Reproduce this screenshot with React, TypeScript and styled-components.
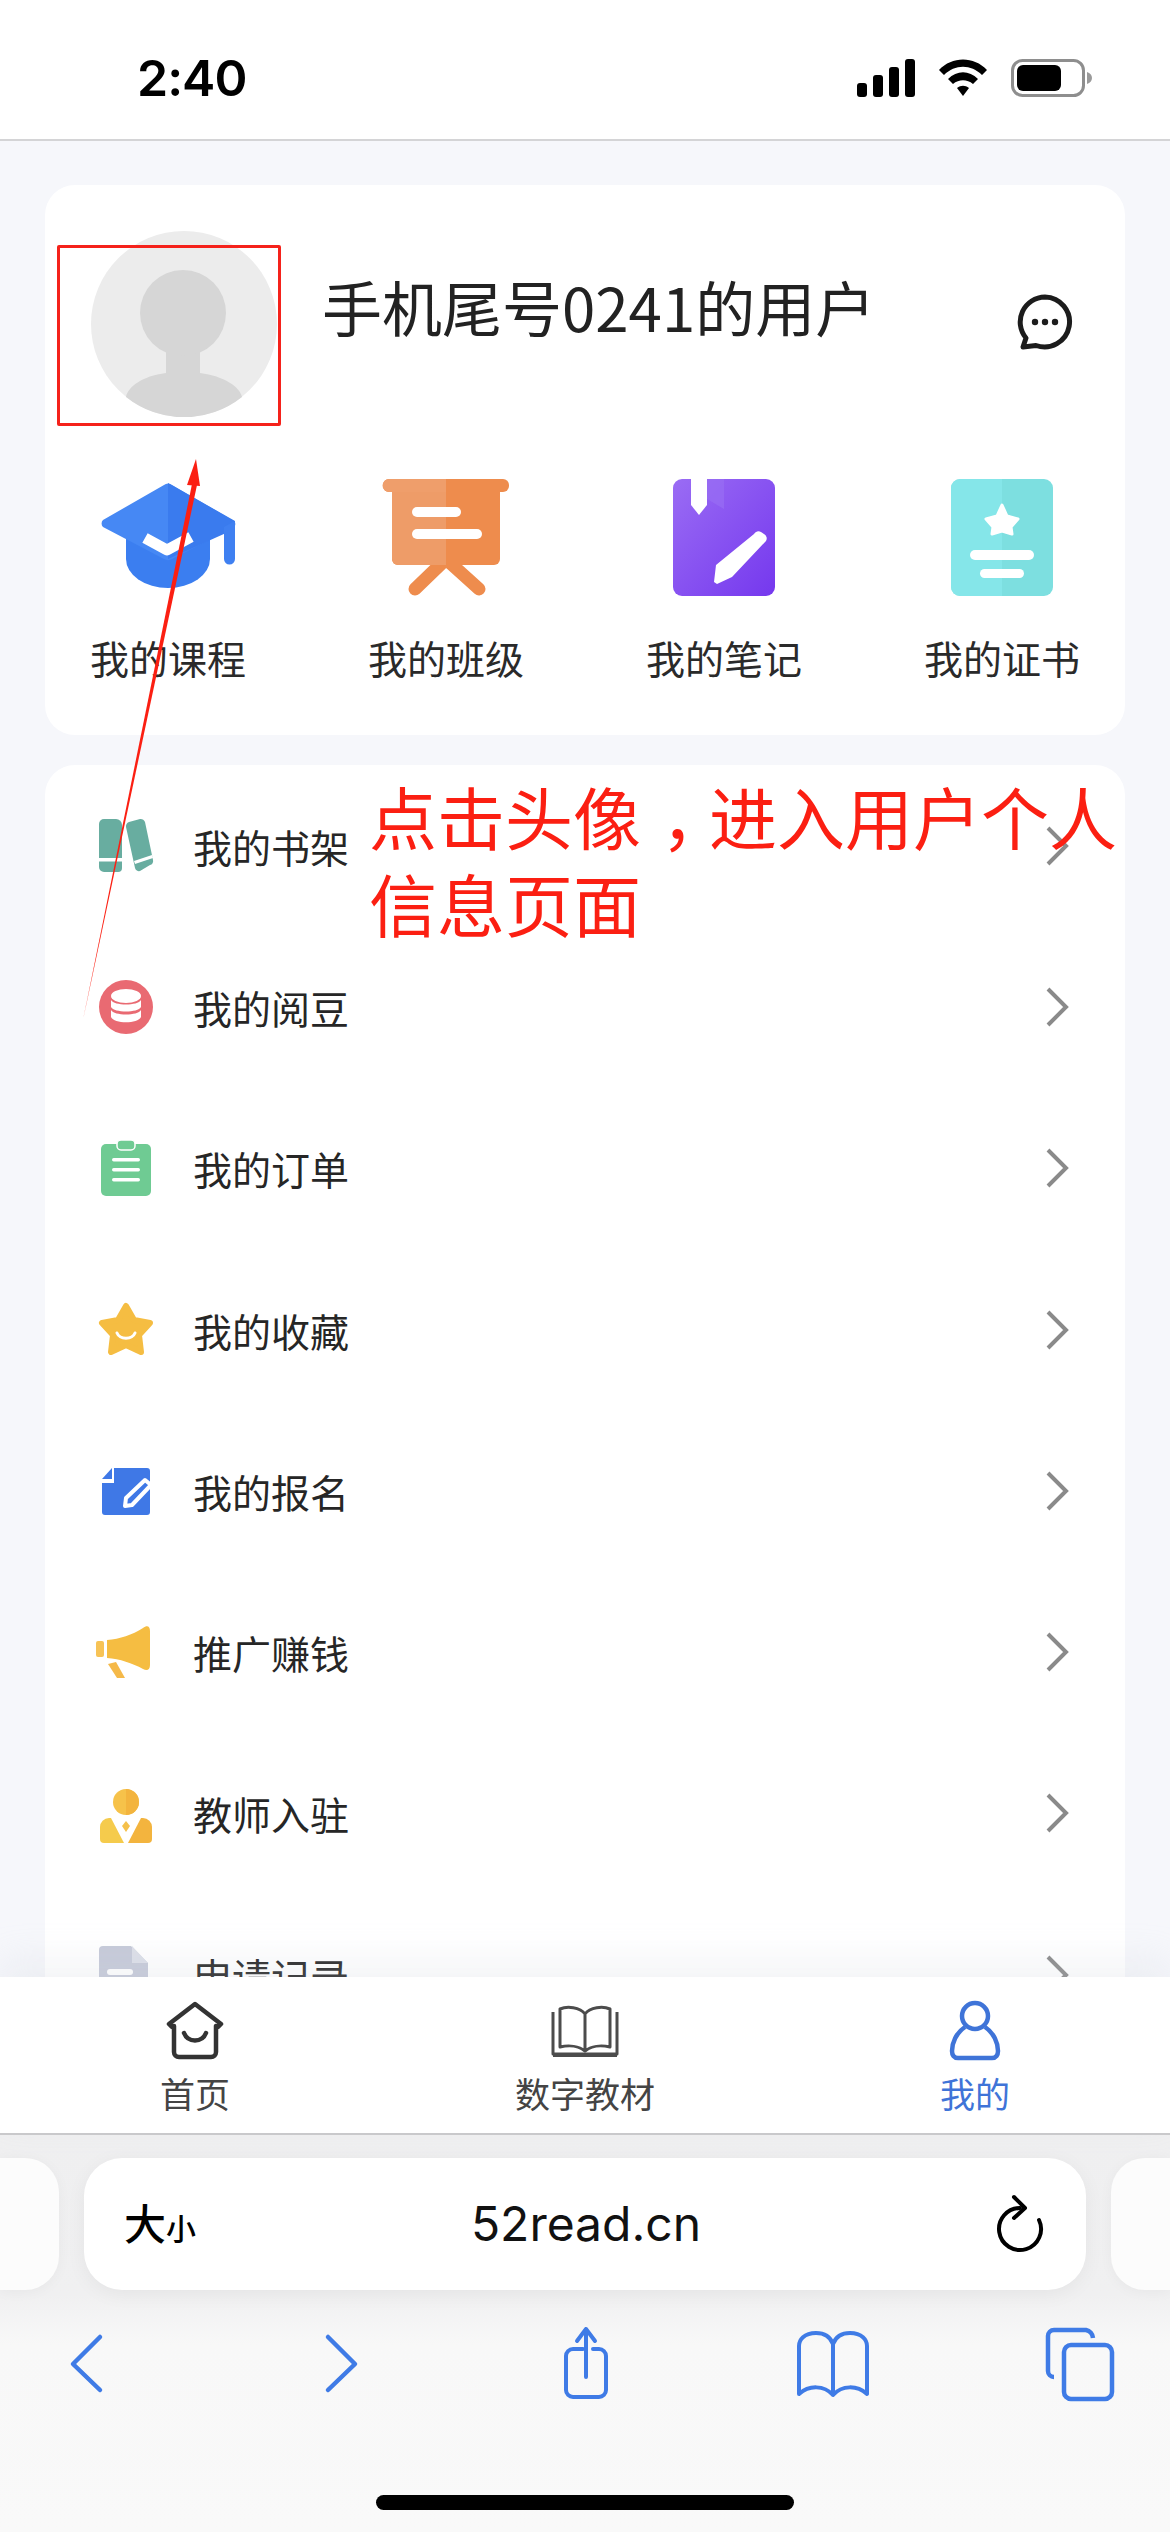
import React from 'react';
import styled, { createGlobalStyle } from 'styled-components';

const GlobalStyle = createGlobalStyle`
  html, body {
    margin: 0;
    padding: 0;
    background: #fff;
  }
  * {
    box-sizing: border-box;
  }
`;

const cjk = `"Noto Sans CJK SC", "Noto Sans", sans-serif`;

const Page = styled.div`
  position: relative;
  width: 1170px;
  height: 2532px;
  overflow: hidden;
  display: flex;
  flex-direction: column;
  background: #f6f7fb;
  font-family: ${cjk};
`;

const StatusBar = styled.header`
  height: 141px;
  flex: none;
  background: #fff;
  border-bottom: 2px solid #d4d4d6;
  display: flex;
  align-items: flex-start;
  justify-content: space-between;
  padding: 50px 77px 0 137px;
`;

const Clock = styled.span`
  font-family: "Inter", "Liberation Sans", sans-serif;
  font-weight: 600;
  font-size: 50px;
  line-height: 56px;
  letter-spacing: -1px;
  color: #000;
`;

const StatusIcons = styled.div`
  display: flex;
  align-items: center;
  height: 56px;
  gap: 23px;
`;

const Main = styled.main`
  flex: 1;
  min-height: 0;
  overflow: hidden;
  padding: 44px 45px 0;
  display: flex;
  flex-direction: column;
  gap: 30px;
`;

const Card = styled.section`
  background: #fff;
  border-radius: 30px;
  flex: none;
`;

const ProfileCard = styled(Card)`
  height: 550px;
  padding: 46px 47px 0;
`;

const ProfileRow = styled.div`
  display: flex;
  align-items: flex-start;
  height: 186px;
  margin-left: -1px;
`;

const Avatar = styled.svg`
  width: 186px;
  height: 186px;
  flex: none;
`;

const UserName = styled.h1`
  margin: 33px 0 0 45px;
  font-size: 60px;
  line-height: 84px;
  font-weight: 400;
  color: #222;
  white-space: nowrap;
`;

const MessageButton = styled.button`
  margin: 63px 5px 0 auto;
  padding: 0;
  border: 0;
  background: none;
  width: 56px;
  height: 56px;
`;

const Shortcuts = styled.div`
  display: flex;
  justify-content: space-between;
  margin-top: 60px;
`;

const Shortcut = styled.div`
  width: 152px;
  display: flex;
  flex-direction: column;
  align-items: center;
  gap: 33px;
`;

const ShortcutIcon = styled.svg`
  width: 140px;
  height: 120px;
  flex: none;
  margin: 0 -10px;
`;

const ShortcutLabel = styled.span`
  font-size: 39px;
  line-height: 54px;
  color: #2a2a2a;
  white-space: nowrap;
`;

const MenuCard = styled(Card)`
  border-radius: 30px 30px 0 0;
`;

const MenuRow = styled.div`
  height: 161.3px;
  display: flex;
  align-items: center;
  padding: 0 55px 0 49px;
`;

const MenuIcon = styled.svg`
  width: 64px;
  height: 64px;
  flex: none;
`;

const MenuLabel = styled.span`
  margin-left: 35px;
  font-size: 39px;
  line-height: 54px;
  color: #262626;
`;

const Chevron = styled.svg`
  margin-left: auto;
  width: 26px;
  height: 42px;
  flex: none;
`;

const TabBar = styled.nav`
  position: relative;
  flex: none;
  height: 158px;
  background: #fff;
  border-bottom: 2px solid #c9c9cb;
  display: grid;
  grid-template-columns: repeat(3, 1fr);
  box-shadow: 0 -18px 34px rgba(200, 204, 216, 0.2);
`;

const Tab = styled.div`
  display: flex;
  flex-direction: column;
  align-items: center;
  padding-top: 21px;
`;

const TabIcon = styled.svg`
  width: 70px;
  height: 64px;
  flex: none;
`;

const TabLabel = styled.span<{ $active?: boolean }>`
  margin-top: 6px;
  font-size: 35px;
  line-height: 50px;
  color: ${(p) => (p.$active ? '#3f74d8' : '#444')};
`;

const Browser = styled.div`
  flex: none;
  height: 397px;
  display: flex;
  flex-direction: column;
  background: linear-gradient(#efeff0 0, #f0f0f1 160px, #f8f8f8 210px, #f9f9f9 100%);
`;

const AddressRow = styled.div`
  display: flex;
  gap: 25px;
  height: 132px;
  margin-top: 23px;
  flex: none;
`;

const SidePill = styled.div<{ $side: 'left' | 'right' }>`
  width: 59px;
  flex: none;
  background: #fcfcfc;
  border-radius: ${(p) => (p.$side === 'left' ? '0 34px 34px 0' : '34px 0 0 34px')};
  box-shadow: 0 2px 14px rgba(0, 0, 0, 0.04);
`;

const AddressPill = styled.div`
  flex: 1;
  display: flex;
  align-items: center;
  background: #fff;
  border-radius: 38px;
  padding: 0 38px 0 40px;
  box-shadow: 0 4px 20px rgba(0, 0, 0, 0.05);
`;

const ReaderButton = styled.span`
  flex: 1;
  color: #000;
  font-weight: 500;
  font-size: 42px;
  line-height: 50px;
  white-space: nowrap;
`;

const ReaderSmall = styled.span`
  font-size: 30px;
`;

const Url = styled.span`
  font-family: "Inter", "Liberation Sans", sans-serif;
  font-size: 48px;
  line-height: 60px;
  color: #111;
`;

const ReloadSlot = styled.div`
  flex: 1;
  display: flex;
  justify-content: flex-end;
`;

const ReloadIcon = styled.svg`
  width: 56px;
  height: 64px;
`;

const Toolbar = styled.div`
  display: flex;
  justify-content: space-between;
  padding: 36px 56px 0 51px;
`;

const ToolIcon = styled.svg`
  width: 70px;
  height: 76px;
  overflow: visible;
`;

const HomeIndicator = styled.div`
  width: 418px;
  height: 15px;
  border-radius: 8px;
  background: #000;
  margin: 93px auto 0;
`;

const HighlightBox = styled.div`
  position: absolute;
  left: 57px;
  top: 245px;
  width: 224px;
  height: 181px;
  border: 3px solid #f5221b;
  border-radius: 2px;
`;

const Note = styled.div`
  position: absolute;
  left: 369px;
  top: 772px;
  width: 780px;
  font-size: 68px;
  line-height: 87px;
  color: #fb1f12;
`;

const NoteComma = styled.span`
  display: inline-block;
  transform: translateX(20px);
`;

const ArrowLayer = styled.svg`
  position: absolute;
  left: 0;
  top: 0;
  width: 1170px;
  height: 1100px;
  pointer-events: none;
`;

const shortcuts = [
  {
    label: '我的课程',
    icon: (
      <>
        <path d="M28 60h84v22a42 29 0 0 1-84 0z" fill="#3b7ef0" />
        <path d="M66 8a6 6 0 0 1 8 0l62 36a4 4 0 0 1 0 6l-62 32a8 8 0 0 1-8 0L5 50a5 5 0 0 1 0-7z" fill="#4688f4" />
        <path d="M70 6l67 38v8l-67 30z" fill="#3a7bee" />
        <path d="M126 50l11-6v38a5.500 5.500 0 0 1-11 0z" fill="#3f80f1" />
        <path d="M47 61l22 12 24-13" fill="none" stroke="#fff" strokeWidth="11" strokeLinejoin="round" />
      </>
    ),
  },
  {
    label: '我的班级',
    icon: (
      <>
        <path d="M68 84L39 112M72 84l31 28" stroke="#ee8c4d" strokeWidth="13" strokeLinecap="round" />
        <rect x="16" y="8" width="108" height="80" rx="6" fill="#ee8c4d" />
        <path d="M16 8h54v80H22a6 6 0 0 1-6-6z" fill="#ee9c68" />
        <rect x="7" y="2" width="126" height="13" rx="6" fill="#ee8c4d" />
        <path d="M13 2h57v13H13a6 6 0 0 1 0-13z" fill="#ef9e6b" />
        <rect x="36" y="30" width="49" height="10" rx="5" fill="#fff" />
        <rect x="36" y="52" width="70" height="10" rx="5" fill="#fff" />
      </>
    ),
  },
  {
    label: '我的笔记',
    icon: (
      <>
        <defs>
          <linearGradient id="noteFill" x1="0" y1="0" x2="1" y2="1">
            <stop offset="0" stopColor="#9a6cf4" />
            <stop offset="1" stopColor="#7538ee" />
          </linearGradient>
        </defs>
        <rect x="19" y="2" width="102" height="117" rx="9" fill="url(#noteFill)" />
        <path d="M53 2h17v30l-17-10z" fill="#9a6ff3" opacity="0.6" />
        <path d="M37 2h16v26l-8 10-8-10z" fill="#fff" />
        <path d="M100 57a5 5 0 0 1 7-2l3 2a5 5 0 0 1 2 7L78 100l-15 7-3-2 2-17z" fill="#fff" />
      </>
    ),
  },
  {
    label: '我的证书',
    icon: (
      <>
        <rect x="19" y="2" width="102" height="117" rx="9" fill="#7ddfe0" />
        <path d="M28 2h42v117H28a9 9 0 0 1-9-9V11a9 9 0 0 1 9-9z" fill="#86e8ea" opacity="0.85" />
        <path d="M70 28l5 11 11 3-7 8 1 7-10-3-10 3 1-7-7-8 11-3z" fill="#fff" strokeLinejoin="round" stroke="#fff" strokeWidth="3" />
        <rect x="38" y="73" width="64" height="10" rx="5" fill="#fff" />
        <rect x="48" y="92" width="44" height="9" rx="4.500" fill="#fff" />
      </>
    ),
  },
];

const menuItems = [
  {
    label: '我的书架',
    icon: (
      <>
        <path d="M10 5h12a6 6 0 0 1 6 6v43a4 4 0 0 1-4 4H10a5 5 0 0 1-5-5V10a5 5 0 0 1 5-5z" fill="#68ada0" />
        <path d="M35 8l11-3a5 5 0 0 1 5 3l8 38a4 4 0 0 1-3 5l-10 6a4 4 0 0 1-5-3L32 13a5 5 0 0 1 3-5z" fill="#68ada0" />
        <rect x="5" y="44" width="23" height="3.500" fill="#fff" />
        <path d="M40 47l18-6 1 3-18 6z" fill="#fff" />
      </>
    ),
  },
  {
    label: '我的阅豆',
    icon: (
      <>
        <circle cx="32" cy="32" r="27" fill="#e96a72" />
        <ellipse cx="32" cy="21" rx="15" ry="7" fill="#fff" />
        <path d="M17 25c3 6 27 6 30 0v7c-3 6-27 6-30 0z" fill="#fff" />
        <path d="M17 35c3 6 27 6 30 0v7c-3 7-27 7-30 0z" fill="#fff" />
      </>
    ),
  },
  {
    label: '我的订单',
    icon: (
      <>
        <rect x="7" y="8" width="50" height="52" rx="5" fill="#6fcb93" />
        <rect x="23" y="4" width="18" height="10" rx="4" fill="#6fcb93" stroke="#fff" strokeWidth="1.500" />
        <rect x="18" y="22" width="28" height="3.500" rx="1.700" fill="#fff" />
        <rect x="18" y="32" width="28" height="3.500" rx="1.700" fill="#fff" />
        <rect x="18" y="42" width="28" height="3.500" rx="1.700" fill="#fff" />
      </>
    ),
  },
  {
    label: '我的收藏',
    icon: (
      <>
        <path
          d="M32 8l8 14 16 3-11 12 2 17-15-7-15 7 2-17L8 25l16-3z"
          fill="#f5bd42"
          stroke="#f5bd42"
          strokeWidth="6"
          strokeLinejoin="round"
        />
        <path d="M23 35c3 7 15 7 18 0" fill="none" stroke="#fff" strokeWidth="3" strokeLinecap="round" />
      </>
    ),
  },
  {
    label: '我的报名',
    icon: (
      <>
        <path d="M20 9h33a3 3 0 0 1 3 3v41a3 3 0 0 1-3 3H11a3 3 0 0 1-3-3V24h12z" fill="#3f78e6" />
        <path d="M8 20L18 9v11z" fill="#3f78e6" />
        <path d="M31 47l1-8 19-18 6 5-19 20z" fill="#3f78e6" stroke="#fff" strokeWidth="4" strokeLinejoin="round" />
      </>
    ),
  },
  {
    label: '推广赚钱',
    icon: (
      <>
        <rect x="2" y="21" width="8" height="16" rx="2" fill="#f7c356" />
        <path d="M13 20c13-1 25-5 36-12 4-3 7-2 7 3v34c0 5-3 6-7 4-11-6-23-10-36-11z" fill="#f5bd42" />
        <path d="M14 44l8-2 9 16h-8z" fill="#f5b949" />
      </>
    ),
  },
  {
    label: '教师入驻',
    icon: (
      <>
        <circle cx="32" cy="21" r="13" fill="#f6c24a" />
        <path d="M32 8a13 13 0 0 1 0 26z" fill="#f3b43e" />
        <path d="M6 46a9 9 0 0 1 9-9h2l13 25H10a4 4 0 0 1-4-4z" fill="#f5cb4c" />
        <path d="M58 46a9 9 0 0 0-9-9h-2L34 62h20a4 4 0 0 0 4-4z" fill="#f3b43e" />
        <path d="M32 40l4 5-4 6-4-6z" fill="#f5c04a" />
      </>
    ),
  },
  {
    label: '申请记录',
    icon: (
      <>
        <path d="M9 3h28l17 17v37a4 4 0 0 1-4 4H9a4 4 0 0 1-4-4V7a4 4 0 0 1 4-4z" fill="#c6cad9" />
        <path d="M38 3l16 17H38z" fill="#dcdfe8" />
        <rect x="13" y="26" width="26" height="6" rx="3" fill="#fff" />
      </>
    ),
  },
];

const tabs = [
  {
    label: '首页',
    icon: (
      <g fill="none" stroke="#333" strokeWidth="4.500" strokeLinejoin="round">
        <path d="M9 26l26-20 26 20-3 3-2-1v26a5 5 0 0 1-5 5H19a5 5 0 0 1-5-5V28l-2 1z" />
        <path d="M24 35c4 10 18 10 22 0" strokeLinecap="round" />
      </g>
    ),
  },
  {
    label: '数字教材',
    icon: (
      <g fill="none" stroke="#4c4c4c" strokeWidth="3" strokeLinejoin="round">
        <path d="M3 14v42h64V14" />
        <path d="M35 16C30 9 17 8 10 11v38c9-2 19-1 25 4 6-5 16-6 25-4V11c-7-3-20-2-25 5zM35 16v37" />
        <path d="M3 57h64" strokeWidth="4" />
      </g>
    ),
  },
  {
    label: '我的',
    active: true,
    icon: (
      <g fill="none" stroke="#3f74d8" strokeWidth="4.500" strokeLinejoin="round">
        <circle cx="35" cy="18" r="13" />
        <path d="M25 29C16 35 12 45 12 53c0 4 2 7 6 7h34c4 0 6-3 6-7 0-8-4-18-13-24" />
      </g>
    ),
  },
];

const App: React.FC = () => {
  return (
    <Page>
      <GlobalStyle />
      <StatusBar>
        <Clock>2:40</Clock>
        <StatusIcons>
          <svg width="58" height="38" viewBox="0 0 58 38" fill="#000">
            <rect x="0" y="24" width="10" height="14" rx="3" />
            <rect x="16" y="16" width="10" height="22" rx="3" />
            <rect x="32" y="8" width="10" height="30" rx="3" />
            <rect x="48" y="0" width="10" height="38" rx="3" />
          </svg>
          <svg width="50" height="38" viewBox="0 0 50 38">
            <path d="M1 11C14-3 36-3 49 11l-5 5C33 5 17 5 6 16z" fill="#000" />
            <path d="M10 20c9-9 21-9 30 0l-5 5c-6-5-14-5-20 0z" fill="#000" />
            <path d="M19 29c4-3 8-3 12 0l-6 8z" fill="#000" />
          </svg>
          <svg width="82" height="38" viewBox="0 0 82 38">
            <rect x="1.500" y="1.500" width="71" height="35" rx="10" fill="none" stroke="#8e8e8e" strokeWidth="3" />
            <rect x="6" y="6" width="44" height="26" rx="6" fill="#000" />
            <path d="M76 13c3 1 5 3 5 6s-2 5-5 6z" fill="#9a9a9a" />
          </svg>
        </StatusIcons>
      </StatusBar>

      <Main>
        <ProfileCard>
          <ProfileRow>
            <Avatar viewBox="0 0 186 186">
              <circle cx="93" cy="93" r="93" fill="#ececec" />
              <path d="M75 120h34v22c24 3 40 14 42 24a93 93 0 0 1-116 0c2-10 16-21 40-24z" fill="#d6d6d6" />
              <circle cx="92" cy="82" r="43" fill="#d6d6d6" />
            </Avatar>
            <UserName>手机尾号0241的用户</UserName>
            <MessageButton aria-label="消息">
              <svg width="56" height="56" viewBox="0 0 56 56" fill="none">
                <path
                  d="M28 3a25 25 0 1 1-9 48.500L6 53l3-9A25 25 0 0 1 28 3z"
                  stroke="#1c1c1c"
                  strokeWidth="5"
                  strokeLinejoin="round"
                />
                <circle cx="18" cy="28" r="3.200" fill="#1c1c1c" />
                <circle cx="28" cy="28" r="3.200" fill="#1c1c1c" />
                <circle cx="38" cy="28" r="3.200" fill="#1c1c1c" />
              </svg>
            </MessageButton>
          </ProfileRow>
          <Shortcuts>
            {shortcuts.map((item) => (
              <Shortcut key={item.label}>
                <ShortcutIcon viewBox="0 0 140 120">{item.icon}</ShortcutIcon>
                <ShortcutLabel>{item.label}</ShortcutLabel>
              </Shortcut>
            ))}
          </Shortcuts>
        </ProfileCard>

        <MenuCard>
          {menuItems.map((item) => (
            <MenuRow key={item.label}>
              <MenuIcon viewBox="0 0 64 64">{item.icon}</MenuIcon>
              <MenuLabel>{item.label}</MenuLabel>
              <Chevron viewBox="0 0 26 42">
                <path d="M4 3l18 18L4 39" fill="none" stroke="#8a8a8a" strokeWidth="4" />
              </Chevron>
            </MenuRow>
          ))}
        </MenuCard>
      </Main>

      <TabBar>
        {tabs.map((tab) => (
          <Tab key={tab.label}>
            <TabIcon viewBox="0 0 70 64">{tab.icon}</TabIcon>
            <TabLabel $active={tab.active}>{tab.label}</TabLabel>
          </Tab>
        ))}
      </TabBar>

      <Browser>
        <AddressRow>
          <SidePill $side="left" />
          <AddressPill>
            <ReaderButton>
              大<ReaderSmall>小</ReaderSmall>
            </ReaderButton>
            <Url>52read.cn</Url>
            <ReloadSlot>
              <ReloadIcon viewBox="0 0 56 64" fill="none" stroke="#000" strokeWidth="4" strokeLinecap="round" strokeLinejoin="round">
                <path d="M47 28A21 21 0 1 1 28 16" />
                <path d="M22 5l11 11-11 10" />
              </ReloadIcon>
            </ReloadSlot>
          </AddressPill>
          <SidePill $side="right" />
        </AddressRow>
        <Toolbar>
          <ToolIcon viewBox="0 0 70 76" fill="none" stroke="#3f7be6" strokeWidth="4.500" strokeLinecap="round" strokeLinejoin="round">
            <path d="M49 11L22 38l27 26" />
          </ToolIcon>
          <ToolIcon viewBox="0 0 70 76" fill="none" stroke="#3f7be6" strokeWidth="4.500" strokeLinecap="round" strokeLinejoin="round">
            <path d="M29 11l27 27-27 26" />
          </ToolIcon>
          <ToolIcon viewBox="0 0 70 76" fill="none" stroke="#3f7be6" strokeWidth="4" strokeLinecap="round" strokeLinejoin="round">
            <path d="M28 24H18a7 7 0 0 0-7 7v34a7 7 0 0 0 7 7h26a7 7 0 0 0 7-7V31a7 7 0 0 0-7-7H38" transform="translate(7 -1)" />
            <path d="M38 51V3M29 15L38 3l9 12" />
          </ToolIcon>
          <ToolIcon viewBox="0 0 70 76" fill="none" stroke="#3f7be6" strokeWidth="4" strokeLinecap="round" strokeLinejoin="round">
            <path d="M37 18C34 10 28 7 20 7 8 7 3 14 3 20v48c10-9 25-9 34 1 9-10 24-10 34-1V20c0-6-5-13-17-13-8 0-14 3-17 11zM37 18v51" />
          </ToolIcon>
          <ToolIcon viewBox="0 0 70 76" fill="none" stroke="#3f7be6" strokeWidth="4.500" strokeLinejoin="round">
            <path d="M10 51a6 6 0 0 1-6-6V10a6 6 0 0 1 6-6h32a9 9 0 0 1 7 8" />
            <rect x="20" y="19" width="48" height="54" rx="7" />
          </ToolIcon>
        </Toolbar>
        <HomeIndicator />
      </Browser>

      <HighlightBox />
      <ArrowLayer viewBox="0 0 1170 1100">
        <path d="M83 1020L192 484l5 1z" fill="#fb1f12" />
        <path d="M196 459l-9 26 13 1z" fill="#fb1f12" />
      </ArrowLayer>
      <Note>
        点击头像<NoteComma>，</NoteComma>进入用户个人
        <br />
        信息页面
      </Note>
    </Page>
  );
};

export default App;
